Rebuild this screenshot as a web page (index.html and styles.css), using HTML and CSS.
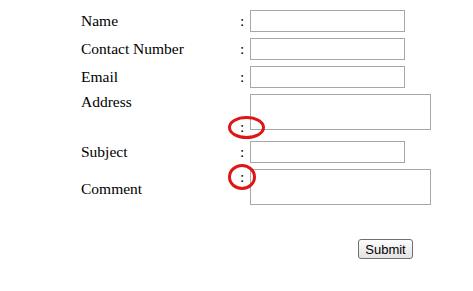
FILE: index.html
```html
<!DOCTYPE html>
<html lang="en">
<head>
    <meta charset="UTF-8">
    <title>Contact Form</title>
    <link rel="stylesheet" href="styles.css">
</head>
<body>
    <form class="contact-form">
        <div class="form-row">
            <label class="field-label">Name</label>
            <span class="colon">:</span>
            <input type="text" class="text-field">
        </div>
        <div class="form-row">
            <label class="field-label">Contact Number</label>
            <span class="colon">:</span>
            <input type="text" class="text-field">
        </div>
        <div class="form-row">
            <label class="field-label">Email</label>
            <span class="colon">:</span>
            <input type="text" class="text-field">
        </div>
        <div class="form-row address-row">
            <label class="field-label">Address</label>
            <span class="colon">:</span>
            <textarea class="text-area"></textarea>
        </div>
        <div class="form-row">
            <label class="field-label">Subject</label>
            <span class="colon">:</span>
            <input type="text" class="text-field">
        </div>
        <div class="form-row comment-row">
            <label class="field-label">Comment</label>
            <span class="colon">:</span>
            <textarea class="text-area"></textarea>
        </div>
        <div class="form-row submit-row">
            <button type="button" class="submit-button">Submit</button>
        </div>

        <!-- red marks drawn over the misplaced colons -->
        <span class="mark mark-address"></span>
        <span class="mark mark-comment"></span>
    </form>
</body>
</html>
```

FILE: styles.css
```css
body {
    margin: 0;
    background: white;
    color: black;
    font-family: 'Liberation Serif', 'Times New Roman', serif;
    font-size: 15.5px;
}
.contact-form {
    position: relative;
    display: flex;
    flex-direction: column;
    gap: 6px;
    padding: 10px 0 0 81px;
    height: 291px;
    box-sizing: border-box;
}
.form-row {
    display: grid;
    grid-template-columns: 159px 10px auto;
    align-items: center;
    line-height: 18px;
}
.field-label {
    white-space: nowrap;
}
.text-field {
    box-sizing: border-box;
    width: 155px;
    height: 22px;
    margin: 0;
    border: 1px solid #a7a7a7;
    padding: 0;
    background: white;
}
.text-area {
    box-sizing: border-box;
    display: block;
    width: 181px;
    height: 36px;
    margin: 0;
    border: 1px solid #a7a7a7;
    padding: 0;
    resize: none;
    background: white;
}
.address-row {
    margin-bottom: 5px;
}
.address-row .field-label {
    align-self: start;
    margin-top: -1px;
}
.address-row .colon {
    align-self: end;
    margin-bottom: -6px;
}
.comment-row .field-label {
    margin-top: 4px;
}
.comment-row .colon {
    align-self: start;
    margin-top: -1px;
}
.submit-row {
    margin-top: 28px;
}
.submit-button {
    grid-column: 3;
    justify-self: start;
    margin-left: 108px;
    width: 55px;
    height: 20px;
    padding: 0;
    border: 1px solid #707070;
    border-radius: 3px;
    background: linear-gradient(#fcfcfc, #e3e3e3);
    font-family: 'Liberation Sans', Arial, sans-serif;
    font-size: 13px;
    color: black;
}
.mark {
    position: absolute;
    box-sizing: border-box;
    border: 3px solid #e01515;
    border-radius: 50%;
}
.mark-address {
    left: 228px;
    top: 116px;
    width: 37px;
    height: 23px;
}
.mark-comment {
    left: 228px;
    top: 164px;
    width: 28px;
    height: 26px;
}
```
